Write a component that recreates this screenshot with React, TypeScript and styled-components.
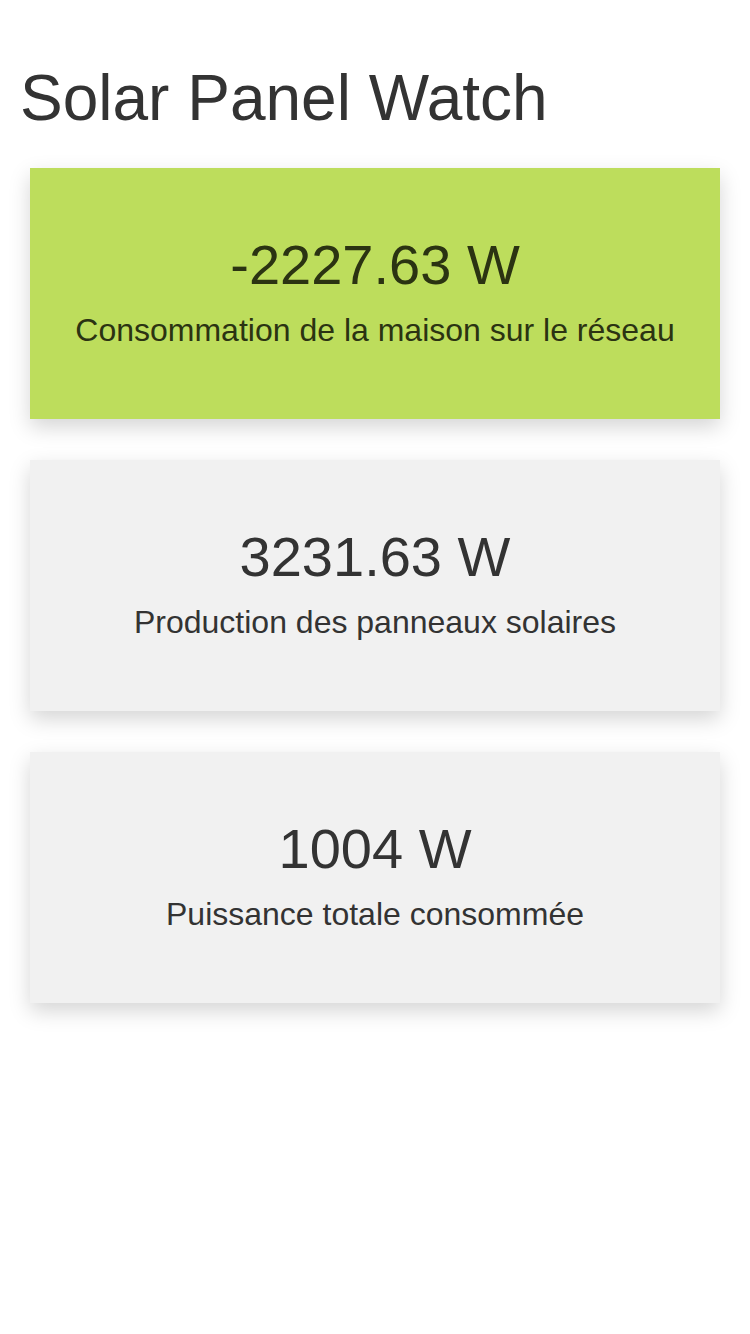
import React from "react"
import styled, { createGlobalStyle } from "styled-components"

const GlobalStyle = createGlobalStyle`
        html, body {
                margin: 0;
                padding: 0;
                background: #fff;
        }
        body {
                font-family: "Liberation Sans", Arial, Helvetica, sans-serif;
                color: #333;
        }
`

export const Page = styled.main`
        padding: 62px 0 40px;
`

export const Title = styled.h1`
        margin: 0 0 34px 20px;
        font-size: 64px;
        line-height: 72px;
        font-weight: 400;
        color: #333;
`

export const CardList = styled.section`
        display: flex;
        flex-direction: column;
        gap: 41px;
        margin: 0 30px;
`

export const Card = styled.div<Ihighlight>`
        background-color: ${props => props.highlight ? "#bddd5c" : "#f1f1f1"};
        color: ${props => props.highlight ? "#2b3312" : "#333"};
        box-shadow: 0 8px 20px rgba(0, 0, 0, 0.17);
        padding: 65px 20px 71px;
        text-align: center;
`

export const Value = styled.div`
        font-size: 56px;
        line-height: 64px;
        margin-bottom: 15px;
`

export const Label = styled.div`
        font-size: 32px;
        line-height: 36px;
`

interface Ihighlight {
        highlight?: boolean
}

const metrics = [
        { value: "-2227.63 W", label: "Consommation de la maison sur le réseau", highlight: true },
        { value: "3231.63 W", label: "Production des panneaux solaires" },
        { value: "1004 W", label: "Puissance totale consommée" },
]

export default function App() {
        return (
                <>
                        <GlobalStyle />
                        <Page>
                                <Title>Solar Panel Watch</Title>
                                <CardList>
                                        {metrics.map(m => (
                                                <Card key={m.label} highlight={m.highlight}>
                                                        <Value>{m.value}</Value>
                                                        <Label>{m.label}</Label>
                                                </Card>
                                        ))}
                                </CardList>
                        </Page>
                </>
        )
}
